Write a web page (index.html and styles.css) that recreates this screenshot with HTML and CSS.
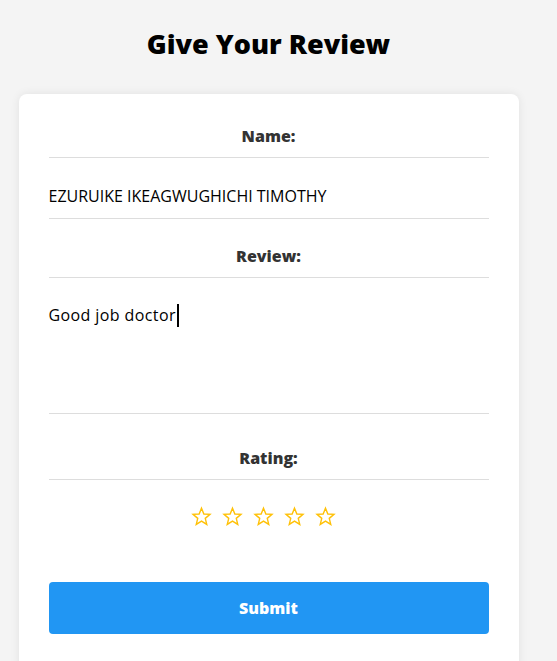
FILE: index.html
```html
<!DOCTYPE html>
<html lang="en">
<head>
<meta charset="utf-8">
<title>Give Your Review</title>
<link rel="stylesheet" href="styles.css">
</head>
<body>
<div class="page">
  <h1 class="title">Give Your Review</h1>
  <form class="card">
    <div class="label">Name:</div>
    <div class="field">EZURUIKE IKEAGWUGHICHI TIMOTHY</div>
    <div class="label label-gap">Review:</div>
    <div class="field area">Good job doctor<span class="caret"></span></div>
    <div class="label label-gap2">Rating:</div>
    <div class="stars">
      <svg class="star" viewBox="0 0 24 24"><path d="M12 2.5l2.7 6.6 7 .5-5.4 4.5 1.7 6.9L12 17.2 6 21l1.7-6.9L2.3 9.6l7-.5z"/></svg>
      <svg class="star" viewBox="0 0 24 24"><path d="M12 2.5l2.7 6.6 7 .5-5.4 4.5 1.7 6.9L12 17.2 6 21l1.7-6.9L2.3 9.6l7-.5z"/></svg>
      <svg class="star" viewBox="0 0 24 24"><path d="M12 2.5l2.7 6.6 7 .5-5.4 4.5 1.7 6.9L12 17.2 6 21l1.7-6.9L2.3 9.6l7-.5z"/></svg>
      <svg class="star" viewBox="0 0 24 24"><path d="M12 2.5l2.7 6.6 7 .5-5.4 4.5 1.7 6.9L12 17.2 6 21l1.7-6.9L2.3 9.6l7-.5z"/></svg>
      <svg class="star" viewBox="0 0 24 24"><path d="M12 2.5l2.7 6.6 7 .5-5.4 4.5 1.7 6.9L12 17.2 6 21l1.7-6.9L2.3 9.6l7-.5z"/></svg>
    </div>
    <button type="button" class="submit">Submit</button>
  </form>
</div>
</body>
</html>
```
FILE: styles.css
```css
html, body {
  margin: 0;
  padding: 0;
  background: #f4f4f4;
  font-family: "Open Sans", "Liberation Sans", sans-serif;
  color: #000;
}
.page {
  width: 537px;
  padding-top: 24px;
}
.title {
  margin: 0;
  text-align: center;
  font-size: 27px;
  line-height: 40px;
  font-weight: 800;
}
.card {
  width: 500px;
  box-sizing: border-box;
  margin: 30px auto 0;
  padding: 30px 30px 40px;
  background: #fff;
  border-radius: 8px;
  box-shadow: 0 0 10px rgba(0, 0, 0, 0.08);
  display: flex;
  flex-direction: column;
}
.label {
  text-align: center;
  font-size: 16px;
  font-weight: 800;
  line-height: 24px;
  padding-bottom: 9px;
  color: #333;
  border-bottom: 1px solid #ddd;
}
.label-gap { margin-top: 25px; }
.label-gap2 { margin-top: 32px; }
.field {
  font-size: 16px;
  line-height: 24px;
  padding: 26px 0 10px;
  border-bottom: 1px solid #ddd;
}
.area {
  height: 136px;
  box-sizing: border-box;
  padding: 25px 0 0;
  letter-spacing: 0.4px;
}
.caret {
  display: inline-block;
  width: 2px;
  height: 23px;
  background: #000;
  vertical-align: -6px;
  margin-left: 1px;
}
.stars {
  display: flex;
  justify-content: center;
  gap: 10px;
  margin-top: 26px;
  padding-right: 10px;
}
.star {
  width: 21px;
  height: 21px;
  fill: none;
  stroke: #ffc107;
  stroke-width: 1.6;
  stroke-linejoin: miter;
}
.submit {
  margin-top: 55px;
  height: 52px;
  border: 0;
  border-radius: 4px;
  background: #2196f3;
  color: #fff;
  font-family: inherit;
  font-size: 16px;
  font-weight: 800;
}
```
